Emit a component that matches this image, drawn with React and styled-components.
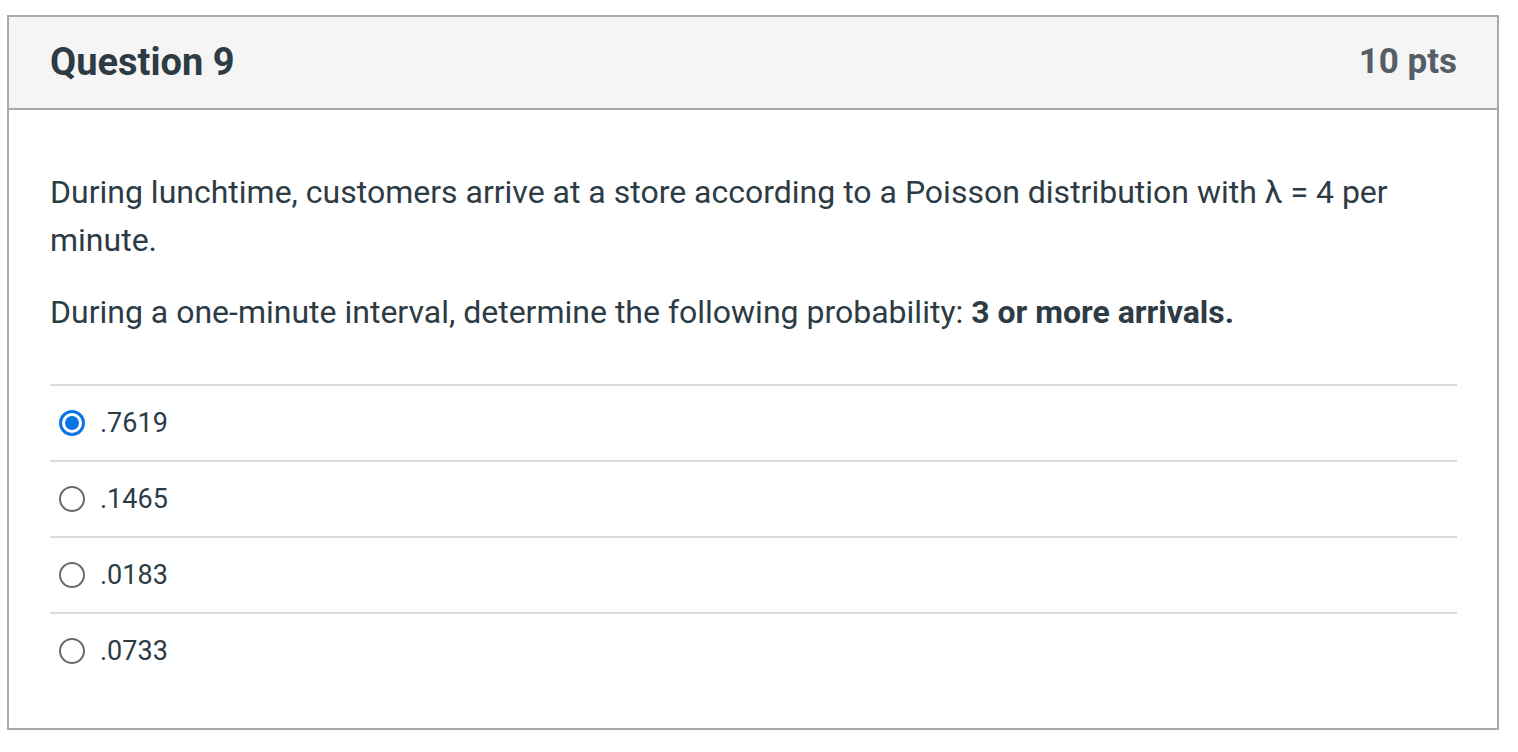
import React from "react";
import styled, { createGlobalStyle } from "styled-components";

const Global = createGlobalStyle`
  html, body { margin: 0; padding: 0; background: #ffffff; }
  body { font-family: Roboto, "Liberation Sans", Arial, sans-serif; color: #2d3b45; }
`;

const Page = styled.div`
  padding: 15px 0 0 7px;
`;

const Card = styled.section`
  width: 1492px;
  height: 715px;
  box-sizing: border-box;
  border: 2px solid #aaaaaa;
  display: flex;
  flex-direction: column;
`;

const Header = styled.header`
  height: 93px;
  box-sizing: border-box;
  background: #f5f5f5;
  border-bottom: 2px solid #aaaaaa;
  display: flex;
  align-items: center;
  justify-content: space-between;
  padding: 0 40px 2px 41px;
`;

const Title = styled.h2`
  margin: 0;
  font-size: 38px;
  font-weight: 700;
  color: #2d3b45;
`;

const Points = styled.span`
  font-size: 35px;
  font-weight: 700;
  color: #555e66;
`;

const Body = styled.div`
  padding: 58px 40px 0 41px;
`;

const Para = styled.p`
  margin: 0 0 24px;
  font-size: 32px;
  line-height: 48px;
  color: #2d3b45;
`;

const Answers = styled.ul`
  list-style: none;
  margin: 48px 0 0;
  padding: 0;
`;

const Answer = styled.li`
  height: 76px;
  box-sizing: border-box;
  border-top: 2px solid #dddddd;
  display: flex;
  align-items: center;
  padding: 0 0 0 9px;
  gap: 15px;
  font-size: 27px;
  color: #2d3b45;
`;

const Radio = styled.span`
  width: 26px;
  height: 26px;
  box-sizing: border-box;
  border-radius: 50%;
  border: ${(p) => (p.$checked ? "3px solid #0b74e5" : "2px solid #6b6b6b")};
  display: flex;
  align-items: center;
  justify-content: center;
  &::after {
    content: "";
    width: 14px;
    height: 14px;
    border-radius: 50%;
    background: ${(p) => (p.$checked ? "#0b74e5" : "transparent")};
  }
`;

const answers = [".7619", ".1465", ".0183", ".0733"];

export default function App() {
  return (
    <Page>
      <Global />
      <Card>
        <Header>
          <Title>Question 9</Title>
          <Points>10 pts</Points>
        </Header>
        <Body>
          <Para>
            During lunchtime, customers arrive at a store according to a Poisson
            distribution with λ = 4 per minute.
          </Para>
          <Para>
            During a one-minute interval, determine the following probability:{" "}
            <b>3 or more arrivals.</b>
          </Para>
          <Answers>
            {answers.map((a, i) => (
              <Answer key={a}>
                <Radio $checked={i === 0} />
                {a}
              </Answer>
            ))}
          </Answers>
        </Body>
      </Card>
    </Page>
  );
}
